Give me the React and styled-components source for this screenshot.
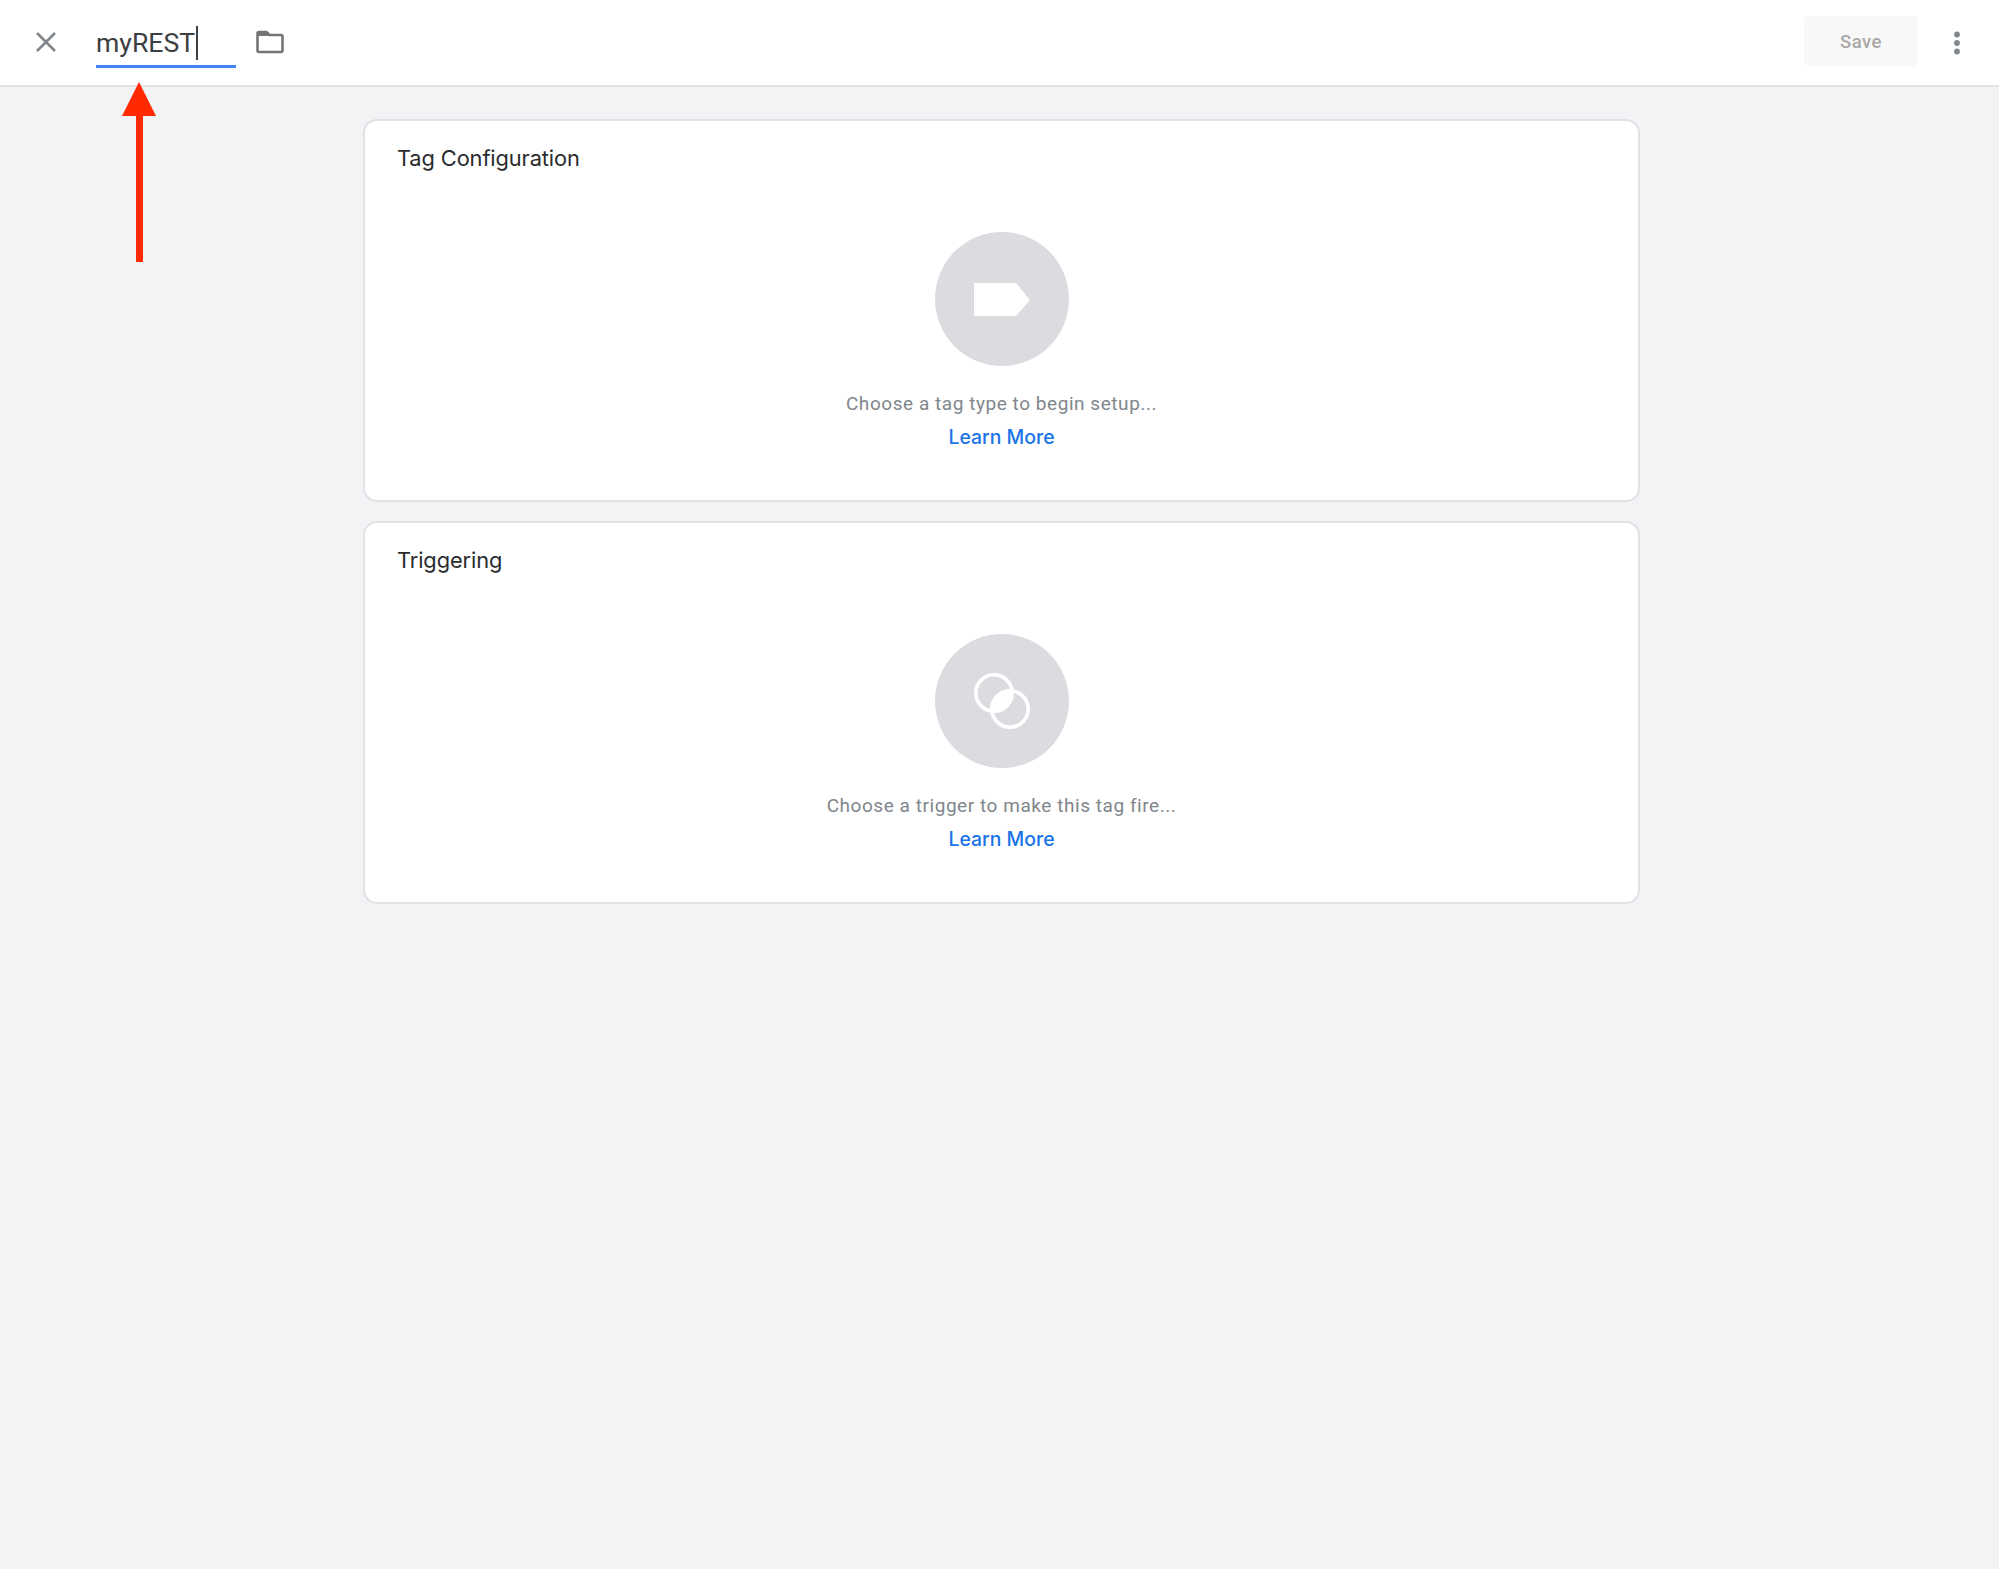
import React from "react";
import styled, { createGlobalStyle } from "styled-components";

const Global = createGlobalStyle`
  html, body { margin: 0; padding: 0; background: #f1f3f4; }
  body { font-family: Roboto, "Liberation Sans", sans-serif; }
`;

const Page = styled.div`
  position: relative;
  width: 1999px;
  height: 1569px;
  background: #f1f3f4;
  overflow: hidden;
`;

const Toolbar = styled.header`
  display: flex;
  align-items: center;
  height: 85px;
  background: #fff;
  border-bottom: 2px solid #e0e2e5;
  padding: 0 37px 0 34px;
`;

const IconBox = styled.div`
  display: flex;
  align-items: center;
  justify-content: center;
  flex: none;
`;

const CloseBox = styled(IconBox)`
  margin-bottom: 1px;
`;

const NameField = styled.div`
  display: flex;
  align-items: center;
  box-sizing: border-box;
  align-self: flex-start;
  width: 140px;
  height: 41px;
  margin: 27px 0 0 38px;
  padding-bottom: 6px;
  border-bottom: 3px solid #4285f4;
  font-size: 26.6px;
  color: #3c4043;
  line-height: 34px;
`;

const Caret = styled.span`
  display: inline-block;
  width: 2px;
  height: 34px;
  margin-left: 1px;
  background: #3c4043;
`;

const FolderBox = styled(IconBox)`
  margin-left: 20px;
  margin-bottom: 1px;
`;

const Spacer = styled.div`
  flex: 1;
`;

const SaveButton = styled.button`
  width: 114px;
  height: 50px;
  margin: 0 34px 3px 0;
  padding: 1px 0 0;
  border: 0;
  border-radius: 5px;
  background: #f8f8f8;
  color: #a8a8a8;
  font: 500 18.5px Roboto, sans-serif;
  letter-spacing: 0.5px;
`;

const Main = styled.main`
  width: 1277px;
  margin: 32px 0 0 363px;
  display: flex;
  flex-direction: column;
  gap: 19px;
`;

const Card = styled.section`
  box-sizing: border-box;
  height: ${(p) => p.$h}px;
  background: #fff;
  border: 2px solid #e0e2e6;
  border-radius: 14px;
  padding: 22px 32px 0;
`;

const CardTitle = styled.h2`
  margin: 0;
  font: 400 21.8px/30px Inter, sans-serif;
  color: #2a2b2e;
  letter-spacing: -0.1px;
`;

const Empty = styled.div`
  display: flex;
  flex-direction: column;
  align-items: center;
  margin-top: 59px;
`;

const Disc = styled.div`
  width: 134px;
  height: 134px;
  border-radius: 50%;
  background: #dadce0;
  display: flex;
  align-items: center;
  justify-content: center;
`;

const Hint = styled.p`
  margin: 23px 0 0;
  font: 400 19px/30px Roboto, sans-serif;
  color: #80868b;
  letter-spacing: 0.55px;
`;

const LearnMore = styled.a`
  margin-top: 3px;
  font: 500 19.4px/30px Inter, sans-serif;
  color: #1a73e8;
`;

const ArrowOverlay = styled.div`
  position: absolute;
  left: 118px;
  top: 80px;
  line-height: 0;
`;

const CloseIcon = () => (
  <svg width="24" height="24" viewBox="0 0 24 24" fill="none" stroke="#80868b" strokeWidth="2.6">
    <path d="M3 3 L21 21 M21 3 L3 21" />
  </svg>
);

const FolderIcon = () => (
  <svg width="28" height="24" viewBox="0 0 28 24" fill="none">
    <path d="M1.5 3.5 Q1.5 2 3 2 H10.5 L13.5 5 H25 Q26.5 5 26.5 6.5 V20.5 Q26.5 22 25 22 H3 Q1.5 22 1.5 20.5 Z" stroke="#757575" strokeWidth="2.6" />
    <path d="M2 2 H10.5 L13.5 5 V6 H2 Z" fill="#757575" />
  </svg>
);

const MoreIcon = () => (
  <svg width="10" height="26" viewBox="0 0 10 26" fill="#80868b">
    <circle cx="5" cy="4.5" r="2.9" />
    <circle cx="5" cy="13" r="2.9" />
    <circle cx="5" cy="21.5" r="2.9" />
  </svg>
);

const TagGlyph = () => (
  <svg width="56" height="33" viewBox="0 0 56 33" fill="#fff">
    <path d="M0 0 H42 L56 17 L42 33 H0 Z" />
  </svg>
);

const TriggerGlyph = () => (
  <svg width="56" height="56" viewBox="0 0 56 56">
    <path d="M38.25 17.75 A18.2 18.2 0 0 1 17.75 38.25 A18.2 18.2 0 0 1 38.25 17.75 Z" fill="#fff" />
    <circle cx="20" cy="20" r="18.2" fill="none" stroke="#fff" strokeWidth="3.6" />
    <circle cx="36" cy="36" r="18.2" fill="none" stroke="#fff" strokeWidth="3.6" />
  </svg>
);

const RedArrow = () => (
  <svg width="42" height="186" viewBox="0 0 42 186" fill="#ff2a00">
    <path d="M21 2 L38 36 H25 V182 H18 V36 H4 Z" />
  </svg>
);

export default function App() {
  return (
    <Page>
      <Global />
      <Toolbar>
        <CloseBox><CloseIcon /></CloseBox>
        <NameField>myREST<Caret /></NameField>
        <FolderBox><FolderIcon /></FolderBox>
        <Spacer />
        <SaveButton>Save</SaveButton>
        <IconBox><MoreIcon /></IconBox>
      </Toolbar>
      <Main>
        <Card $h={383}>
          <CardTitle>Tag Configuration</CardTitle>
          <Empty>
            <Disc><TagGlyph /></Disc>
            <Hint>Choose a tag type to begin setup...</Hint>
            <LearnMore>Learn More</LearnMore>
          </Empty>
        </Card>
        <Card $h={383}>
          <CardTitle>Triggering</CardTitle>
          <Empty>
            <Disc><TriggerGlyph /></Disc>
            <Hint>Choose a trigger to make this tag fire...</Hint>
            <LearnMore>Learn More</LearnMore>
          </Empty>
        </Card>
      </Main>
      <ArrowOverlay><RedArrow /></ArrowOverlay>
    </Page>
  );
}
